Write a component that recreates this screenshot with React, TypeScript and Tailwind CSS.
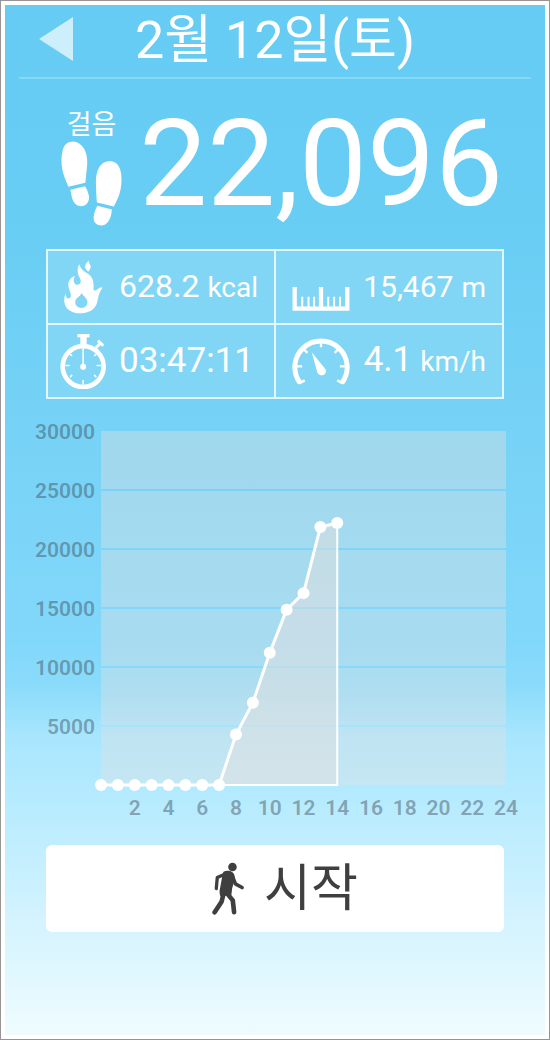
import type { ReactNode } from 'react'

const STEPS_BY_HOUR = [0, 0, 0, 0, 0, 0, 0, 0, 4280, 6980, 11200, 14860, 16260, 21860, 22200]
const Y_TICKS = [30000, 25000, 20000, 15000, 10000, 5000]
const X_TICKS = [2, 4, 6, 8, 10, 12, 14, 16, 18, 20, 22, 24]

// Plot area inside the chart's 512 x 402 view box
const PLOT = { left: 82, right: 487, top: 12, bottom: 366 }

const xAt = (hour: number) => PLOT.left + (hour * (PLOT.right - PLOT.left)) / 24
const yAt = (steps: number) => PLOT.bottom - (steps * (PLOT.bottom - PLOT.top)) / 30000

function FootstepsIcon() {
  return (
    <svg viewBox="17 16 183 256" className="h-[85px] w-[61px]" fill="currentColor" aria-hidden="true">
      <path d="M47 18C63 16 78 25 87 41C97 60 97 82 94 103C92 117 92 128 90 142L39 154C33 139 25 123 21 103C17 83 17 62 22 43C26 28 35 19 47 18Z" />
      <path d="M45 163L89 152C94 160 100 172 101 184C102 200 93 210 81 212C68 214 57 206 52 193C48 183 47 173 45 163Z" />
      <path d="M168 77C152 75 138 83 130 98C122 114 121 132 122 153C123 171 123 187 125 201L176 213C183 199 192 183 196 163C200 142 200 119 195 102C190 87 181 79 168 77Z" />
      <path d="M126 211L170 222C169 235 166 248 160 257C153 268 143 272 132 270C121 268 114 259 115 246C116 232 121 220 126 211Z" />
    </svg>
  )
}

function FlameIcon() {
  return (
    <svg viewBox="76 62 118 161" className="h-[54px] w-[39px]" fill="currentColor" aria-hidden="true">
      <path d="M151 62C144 69 138 76 140 84C141 89 147 91 149 96C156 89 159 82 155 75C153 71 150 68 151 62Z" />
      <path
        fillRule="evenodd"
        d="M122 74C117 85 116 94 119 105C122 114 129 121 126 129C123 137 113 138 108 131C104 125 105 117 109 109C98 112 90 122 89 134C88 147 97 158 97 169C96 178 88 180 84 174C81 170 81 166 81 162C74 177 75 196 86 208C97 219 113 223 130 222C149 221 166 212 174 196C179 186 178 163 193 145C184 141 180 147 174 152C170 155 165 153 165 146C167 132 164 117 155 108C147 100 137 98 130 89C126 84 124 80 122 74ZM130 160C132 170 147 175 147 189C147 199 139 206 129 206C118 206 110 199 110 188C110 175 126 172 130 160Z"
      />
    </svg>
  )
}

function StopwatchIcon() {
  return (
    <svg viewBox="62 283 140 164" className="h-[55px] w-[47px]" fill="none" stroke="currentColor" aria-hidden="true">
      <circle cx="131" cy="380" r="61" strokeWidth="14" />
      <path d="M114 288H150" strokeWidth="10" />
      <path d="M132 288V318" strokeWidth="19" />
      <path d="M169 324L184 309" strokeWidth="9" />
      <path d="M175 303L191 318" strokeWidth="9" />
      <path d="M131 326V380" strokeWidth="5" />
      <path
        d="M78 377H91M171 377H184M131 420V434M92 343L98 348M170 343L164 348M92 412L98 405M170 412L164 405"
        strokeWidth="5"
      />
      <circle cx="131" cy="381" r="9" fill="currentColor" stroke="none" />
    </svg>
  )
}

function RulerIcon() {
  return (
    <svg viewBox="63 138 174 73" className="h-6 w-[58px]" fill="none" stroke="currentColor" aria-hidden="true">
      <path d="M70 138V204H230V138M150 138V204" strokeWidth="13" />
      <path d="M93 168V200M112 168V200M129 168V200M172 168V200M190 168V200M208 168V200" strokeWidth="6" />
    </svg>
  )
}

function GaugeIcon() {
  return (
    <svg viewBox="63 293 174 142" className="h-[47px] w-[58px]" fill="none" stroke="currentColor" aria-hidden="true">
      <path d="M87 429A79 79 0 1 1 213 429" strokeWidth="15" />
      <path d="M84 430L101 421M216 430L199 421" strokeWidth="8" />
      <path d="M76 379H93M224 379H207M150 305V321M98 327L109 338M202 327L191 338" strokeWidth="7" />
      <path d="M122 336L163 387C167 395 164 402 157 405C149 407 142 404 139 397Z" fill="currentColor" stroke="none" />
    </svg>
  )
}

function WalkerIcon() {
  return (
    <svg
      viewBox="67 66 97 160"
      className="h-[53px] w-8"
      fill="none"
      stroke="currentColor"
      strokeLinecap="round"
      strokeLinejoin="round"
      aria-hidden="true"
    >
      <circle cx="129" cy="81" r="13" fill="currentColor" stroke="none" />
      <path d="M109 101L83 113L80 146" strokeWidth="10" />
      <path d="M128 106L138 132L158 143" strokeWidth="11" />
      <path
        d="M103 97C113 91 127 94 132 103C137 112 130 132 126 145L124 164L94 168C90 159 92 150 94 142L100 110Z"
        fill="currentColor"
        strokeWidth="4"
      />
      <path d="M102 162L96 186L75 218" strokeWidth="14" />
      <path d="M112 160L130 182L134 218" strokeWidth="14" />
    </svg>
  )
}

function Stat({ icon, value, unit, valueClassName }: {
  icon: ReactNode
  value: string
  unit?: string
  valueClassName: string
}) {
  return (
    <div className="flex items-center justify-between bg-[#81d6f6] py-2 pr-4 pl-3">
      <dt className="flex h-14 shrink-0 items-center justify-center">{icon}</dt>
      <dd className="flex items-baseline gap-2 whitespace-nowrap">
        <span className={valueClassName}>{value}</span>
        {unit && <span className="text-[28px] leading-10">{unit}</span>}
      </dd>
    </div>
  )
}

function StepsChart() {
  const points = STEPS_BY_HOUR.map((steps, hour) => ({ x: xAt(hour), y: yAt(steps) }))
  const line = points.map((p) => `${p.x},${p.y}`).join(' ')
  const last = points[points.length - 1]

  return (
    <svg viewBox="0 0 512 402" className="h-auto w-full" role="img" aria-label="시간별 걸음">
      {Y_TICKS.map((tick, i) => {
        const top = yAt(tick) + (i === 0 ? 0 : 1)
        const bottom = yAt(tick - 5000) - (i === Y_TICKS.length - 1 ? 0 : 1)
        return (
          <rect
            key={tick}
            x={PLOT.left}
            y={top}
            width={PLOT.right - PLOT.left}
            height={bottom - top}
            className="fill-[#e2e0e0]/40"
          />
        )
      })}

      <polygon points={`${line} ${last.x},${PLOT.bottom}`} className="fill-[#e2e0e0]/50" />
      <path d={`M${PLOT.left} ${PLOT.bottom}H${last.x}V${last.y}`} className="fill-none stroke-white stroke-2" />
      <polyline points={line} className="fill-none stroke-white stroke-3" />
      {points.map((p) => (
        <circle key={p.x} cx={p.x} cy={p.y} r="6" className="fill-white" />
      ))}

      <g className="fill-[#3c4a55]/45 text-[21px] font-semibold">
        {Y_TICKS.map((tick) => (
          <text key={tick} x="76" y={yAt(tick) + 8} textAnchor="end">
            {tick}
          </text>
        ))}
        {X_TICKS.map((tick) => (
          <text key={tick} x={xAt(tick)} y="396" textAnchor="middle">
            {tick}
          </text>
        ))}
      </g>
    </svg>
  )
}

export default function App() {
  return (
    <div className="flex min-h-screen flex-col border border-[#959595] bg-white p-1 font-['Roboto','Noto_Sans_CJK_KR',sans-serif] text-white">
      <main className="flex-1 bg-[linear-gradient(#66ccf3_0%,#67cdf3_20%,#76d2f6_41%,#82d8fb_62%,#8adbfa_66%,#a8e6fe_71%,#b3eaff_76%,#c2eefe_82%,#d9f5fe_91%,#effcff_100%)] px-3.5">
        <header className="relative flex h-[74px] items-center justify-center border-b-2 border-[#86d8f7]">
          <button type="button" aria-label="이전 날짜" className="absolute top-3 left-5 text-[#cdeffb]">
            <svg viewBox="0 0 34 44" className="h-11 w-[34px]" fill="currentColor" aria-hidden="true">
              <path d="M34 0V44L0 22Z" />
            </svg>
          </button>
          <h1 className="text-[52px] leading-[72px]">2월 12일(토)</h1>
        </header>

        <section className="flex items-center justify-between pr-7 pl-[42px]">
          <div className="flex flex-col items-center pt-1.5">
            <span className="text-[27px] leading-8">걸음</span>
            <FootstepsIcon />
          </div>
          <p className="text-[121px] leading-[170px]">22,096</p>
        </section>

        <dl className="mx-[27px] grid grid-cols-2 gap-0.5 border-2 border-[#e3f6fd] bg-[#e3f6fd]">
          <Stat icon={<span className="px-1"><FlameIcon /></span>} value="628.2" unit="kcal" valueClassName="text-[32px] leading-10" />
          <Stat icon={<span className="px-1 pt-6"><RulerIcon /></span>} value="15,467" unit="m" valueClassName="text-[30px] leading-10" />
          <Stat icon={<StopwatchIcon />} value="03:47:11" valueClassName="pr-1 text-[35px] leading-10" />
          <Stat icon={<span className="px-1"><GaugeIcon /></span>} value="4.1" unit="km/h" valueClassName="text-[35px] leading-10" />
        </dl>

        <section className="pt-5">
          <StepsChart />
        </section>

        <div className="px-[27px] pt-6 pb-8">
          <button
            type="button"
            className="flex h-[87px] w-full items-center justify-center gap-5 rounded-md bg-white pl-5 text-[51px] leading-none text-[#3f3f3f]"
          >
            <WalkerIcon />
            시작
          </button>
        </div>
      </main>
    </div>
  )
}
